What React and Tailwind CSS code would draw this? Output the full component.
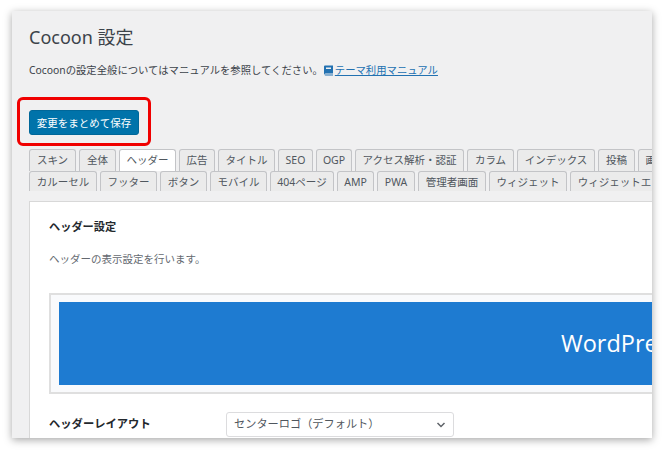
const row1 = [["スキン",47],["全体",37],["ヘッダー",57,true],["広告",36],["タイトル",57],["SEO",35],["OGP",36],["アクセス解析・認証",109],["カラム",47],["インデックス",78],["投稿",37],["画面",36]];
const row2 = [["カルーセル",68],["フッター",57],["ボタン",47],["モバイル",57],["404ページ",64],["AMP",37],["PWA",38],["管理者画面",68],["ウィジェット",78],["ウィジェットエリア",110]];
const font = "font-['Noto_Sans','Noto_Sans_CJK_JP',sans-serif]";

function Tab({ label, width, active, first }) {
  return (
    <div
      style={{ width }}
      className={`${first ? "pt-[1px]" : ""} h-[22px] shrink-0 rounded-t-[3px] border border-b-0 border-[#c3c4c7] flex items-center justify-center whitespace-nowrap overflow-hidden text-[10.5px] ${active ? "bg-white text-[#50575e] relative z-10" : "bg-[#ebebeb] text-[#50575e]"}`}
    >
      {label}
    </div>
  );
}

export default function App() {
  return (
    <div className={`w-[664px] h-[451px] bg-white pl-[12px] pt-[11px] overflow-hidden ${font}`}>
      <div className="relative w-[640px] h-[427px] bg-[#f0f0f1] overflow-hidden shadow-[0_2px_8px_rgba(0,0,0,0.35)] pl-[17px] pt-[13px]">
        <h1 className="text-[18px] leading-[26px] text-[#3c434a]">Cocoon 設定</h1>
        <p className="mt-[12px] text-[10.35px] leading-[16px] text-[#3c434a] flex items-center whitespace-nowrap">
          Cocoonの設定全般についてはマニュアルを参照してください。
          <svg width="11" height="11" viewBox="0 0 11 11" className="mr-[1px]">
            <path d="M1 1.5A1 1 0 0 1 2 .5h8v8H2.500A1.500 1.500 0 0 0 1 10Z" fill="#2271b1" />
            <path d="M1.500 9.500h8.500v1H2.500a1 1 0 0 1-1-1Z" fill="#2271b1" />
            <rect x="3" y="2.500" width="5" height="1.500" fill="#f0f0f1" />
          </svg>
          <a className="text-[#2271b1] underline">テーマ利用マニュアル</a>
        </p>
        <button className="block mt-[32px] w-[110px] h-[25px] bg-[#0073aa] rounded-[3px] border border-[#006799] text-white text-[10.5px] leading-[20px] text-center">
          変更をまとめて保存
        </button>
        <div className="absolute left-[5px] top-[86px] w-[134px] h-[49px] rounded-[6px] border-[3px] border-[#f00000]" />
        <div className="mt-[14px] flex gap-[3px] overflow-hidden">
          {row1.map(([l, w, a]) => <Tab key={l} label={l} width={w} active={a} first />)}
        </div>
        <div className="h-[20px] flex gap-[3px] overflow-hidden">
          {row2.map(([l, w]) => <Tab key={l} label={l} width={w} />)}
        </div>
        <div className="mt-[10px] h-[300px] bg-white border-l border-t border-[#d8d8d8] pl-[19px] pt-[17px]">
          <h2 className="text-[11.2px] font-bold leading-[16px] text-[#23282d]">ヘッダー設定</h2>
          <p className="mt-[16px] text-[10.5px] leading-[16px] text-[#646970]">ヘッダーの表示設定を行います。</p>
          <div className="mt-[26px] h-[101px] border-2 border-r-0 border-[#dfdfdf] bg-[#f9fafc] pl-[8px] pt-[7px]">
            <div className="h-[83px] bg-[#1e7bd1] flex items-center pl-[502px] overflow-hidden">
              <span className="text-[23.500px] text-white whitespace-nowrap font-['Open_Sans',sans-serif]">WordPress</span>
            </div>
          </div>
          <div className="mt-[18px] flex items-center">
            <span className="w-[177px] text-[11.3px] font-bold text-[#23282d]">ヘッダーレイアウト</span>
            <div className="w-[228px] h-[25px] rounded-[3px] border border-[#dcdcde] bg-white flex items-center justify-between pl-[7px] pr-[7px] text-[11.2px] text-[#50575e]">
              <span>センターロゴ（デフォルト）</span>
              <svg width="10" height="10" viewBox="0 0 10 10" fill="none" stroke="#5f6368" strokeWidth="1.500"><path d="M1.500 3l3.500 3.500L8.500 3" /></svg>
            </div>
          </div>
        </div>
      </div>
    </div>
  );
}
